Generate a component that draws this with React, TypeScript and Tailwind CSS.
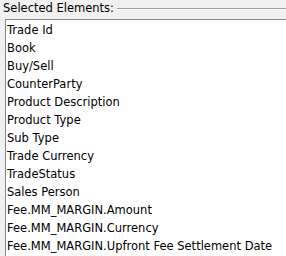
const fields = [
  "Trade Id",
  "Book",
  "Buy/Sell",
  "CounterParty",
  "Product Description",
  "Product Type",
  "Sub Type",
  "Trade Currency",
  "TradeStatus",
  "Sales Person",
  "Fee.MM_MARGIN.Amount",
  "Fee.MM_MARGIN.Currency",
  "Fee.MM_MARGIN.Upfront Fee Settlement Date",
];

export default function App() {
  return (
    <div className="w-[286px] h-[256px] overflow-hidden bg-[#f0f0f0] text-[11.5px] text-black font-['DejaVu_Sans',Verdana,sans-serif]">
      <div className="flex h-[19px]">
        <span className="pl-[3px] pr-[3px] leading-[16px] whitespace-nowrap">Selected Elements:</span>
        <div className="flex-1 mt-[8px] h-[2px] border-t border-[#a0a0a0] border-b border-b-white" />
      </div>
      <div className="ml-[5px] h-[237px] bg-white border-l border-t border-[#828790] pt-[1px] pl-[1px]">
        {fields.map((f) => (
          <div key={f} className="h-[18px] leading-[18px] whitespace-nowrap">
            {f}
          </div>
        ))}
      </div>
    </div>
  );
}
